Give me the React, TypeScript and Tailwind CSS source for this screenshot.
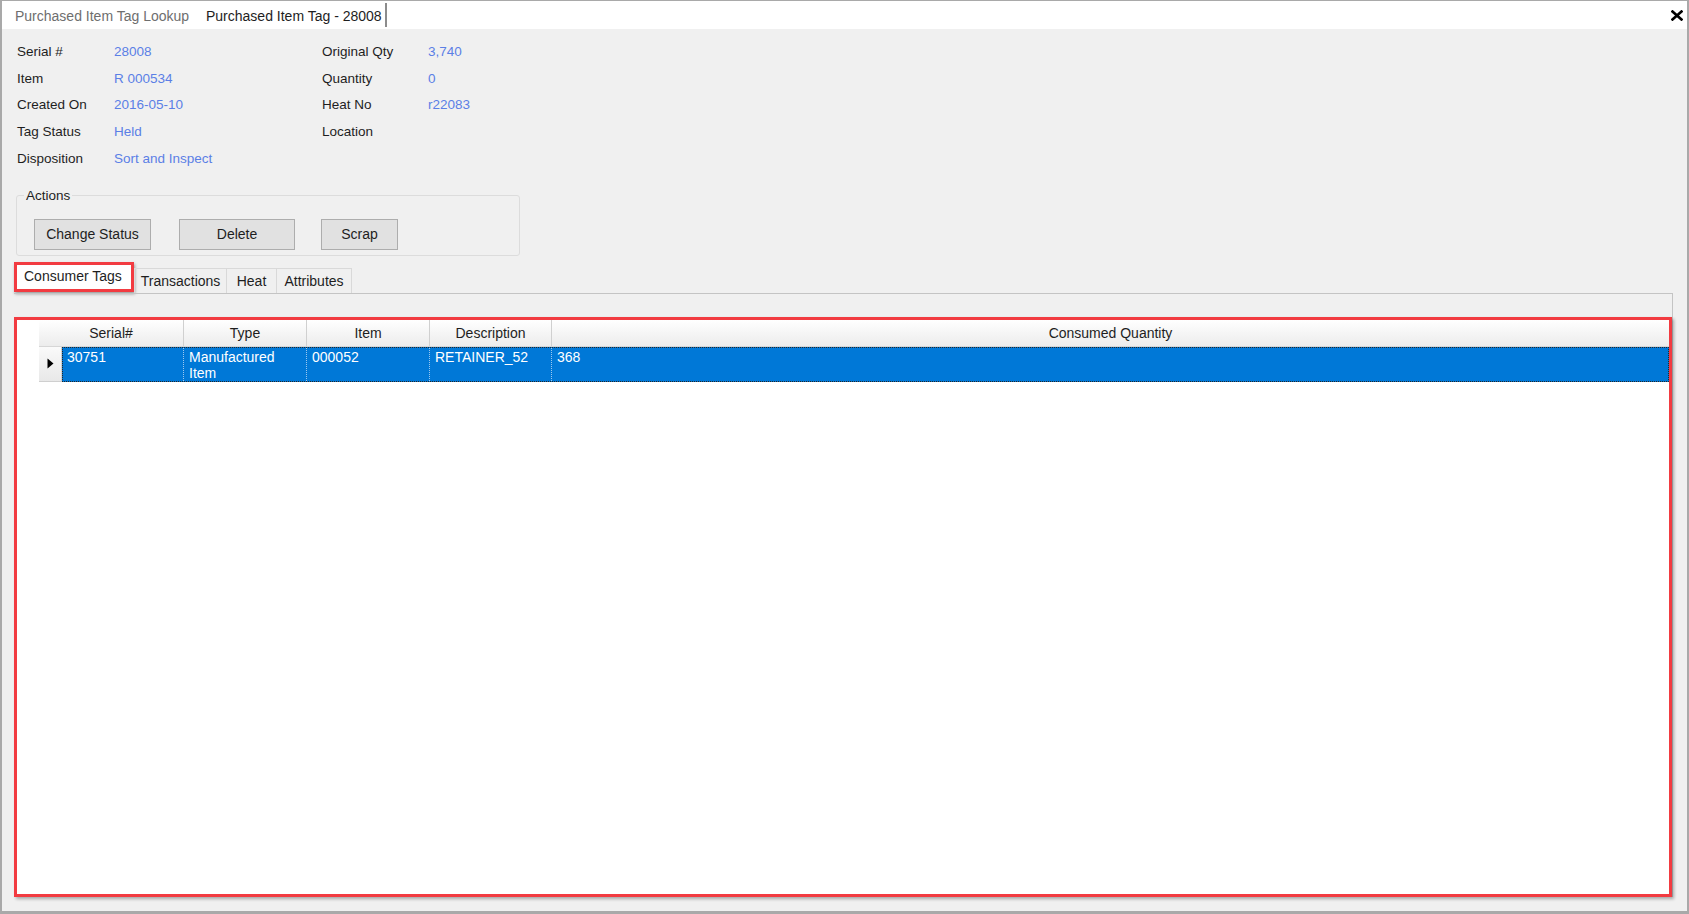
import React from "react";

const info = [
    ["Serial #", "28008", "Original Qty", "3,740"],
    ["Item", "R 000534", "Quantity", "0"],
    ["Created On", "2016-05-10", "Heat No", "r22083"],
    ["Tag Status", "Held", "Location", ""],
    ["Disposition", "Sort and Inspect", "", ""],
];

const App = () => {
    return (
        <div className="w-[1689px] h-[914px] flex flex-col bg-[#f0f0f0] border-t border-l-2 border-r-2 border-b-[3px] border-[#a9a9a9] font-['Liberation_Sans',Arial,sans-serif] text-[13.5px] text-[#1e1e1e] overflow-hidden">
            {/* Document tabs */}
            <div className="h-[28px] bg-white flex items-stretch text-[14px]">
                <div className="w-[196px] pl-[13px] pt-[2px] flex items-center text-[#6e6e6e]">Purchased Item Tag Lookup</div>
                <div className="w-[189px] pl-[8px] pt-[2px] flex items-center border-r-2 border-[#8c8c8c] my-[2px]">Purchased Item Tag - 28008</div>
                <div className="flex-1" />
                <div className="pr-[4px] flex items-center">
                    <svg width="12" height="11" viewBox="0 0 12 11">
                        <path d="M1.5 1.5 L10.5 9.5 M10.5 1.5 L1.5 9.5" stroke="#000" strokeWidth="2.6" strokeLinecap="square" />
                    </svg>
                </div>
            </div>

            <div className="flex-1 flex flex-col pl-[12px] pr-[14px] pb-[14px]">
                {/* Header fields */}
                <div className="pt-[10px] pl-[3px] grid grid-cols-[97px_208px_106px_1fr] leading-[26.7px]">
                    {info.map((r, i) => (
                        <React.Fragment key={i}>
                            <div>{r[0]}</div>
                            <div className="text-[#5b7fe6]">{r[1]}</div>
                            <div>{r[2]}</div>
                            <div className="text-[#5b7fe6]">{r[3]}</div>
                        </React.Fragment>
                    ))}
                </div>

                {/* Actions */}
                <fieldset className="mt-[15px] ml-[2px] w-[504px] border border-[#dcdcdc] rounded-[3px] px-[17px] pb-[5px]">
                    <legend className="ml-[-10px] px-[2px] leading-[16px]">Actions</legend>
                    <div className="flex pt-[15px] text-[14px]">
                        <button className="h-[31px] w-[117px] bg-[#e1e1e1] border border-[#adadad]">Change Status</button>
                        <button className="h-[31px] w-[116px] ml-[28px] bg-[#e1e1e1] border border-[#adadad]">Delete</button>
                        <button className="h-[31px] w-[77px] ml-[26px] bg-[#e1e1e1] border border-[#adadad]">Scrap</button>
                    </div>
                </fieldset>

                {/* Tabs */}
                <div className="mt-[6px] h-[31px] flex items-end text-[14px]">
                    <div className="h-[30px] w-[120px] mb-[1px] bg-white border-[3px] border-[#f23b41] shadow-[1px_2px_3px_rgba(0,0,0,0.35)] flex items-center pl-[7px]">Consumer Tags</div>
                    <div className="h-[25px] w-[93px] border border-b-0 border-[#d9d9d9] flex items-center justify-center pt-[1px]">Transactions</div>
                    <div className="h-[25px] w-[50px] border border-l-0 border-b-0 border-[#d9d9d9] flex items-center justify-center pt-[1px]">Heat</div>
                    <div className="h-[25px] w-[75px] border border-l-0 border-b-0 border-[#d9d9d9] flex items-center justify-center pt-[1px]">Attributes</div>
                </div>

                {/* Tab page */}
                <div className="flex-1 flex flex-col border-t border-r border-[#c4c4c4] pt-[23px]">
                    <div className="flex-1 flex flex-col bg-white border-[3px] border-[#f23b41] shadow-[2px_2px_3px_rgba(0,0,0,0.3)] pl-[22px] text-[14px]">
                        {/* Column headers */}
                        <div className="h-[27px] flex bg-linear-to-b from-white to-[#ececec] border-b border-[#d6d6d6]">
                            <div className="w-[145px] border-r border-[#d0d0d0] flex items-center justify-center pt-[2px]">Serial#</div>
                            <div className="w-[123px] border-r border-[#d0d0d0] flex items-center justify-center pt-[2px]">Type</div>
                            <div className="w-[123px] border-r border-[#d0d0d0] flex items-center justify-center pt-[2px]">Item</div>
                            <div className="w-[122px] border-r border-[#d0d0d0] flex items-center justify-center pt-[2px]">Description</div>
                            <div className="flex-1 flex items-center justify-center pt-[2px]">Consumed Quantity</div>
                        </div>

                        {/* Selected row */}
                        <div className="h-[35px] flex">
                            <div className="w-[23px] bg-linear-to-b from-[#fafafa] to-[#e8e8e8] border-r border-b border-[#cfcfcf] flex items-center justify-center">
                                <svg width="7" height="11" viewBox="0 0 7 11">
                                    <path d="M0.5 0.5 L6.5 5.5 L0.5 10.5 Z" fill="#000" />
                                </svg>
                            </div>
                            <div className="flex-1 flex bg-[#0078d7] text-white border border-dotted border-[#262626] leading-[16px]">
                                <div className="w-[121px] pl-[4px] pt-[1px] border-r border-dotted border-[#9cc8ef]">30751</div>
                                <div className="w-[123px] pl-[5px] pt-[1px] border-r border-dotted border-[#9cc8ef]">Manufactured<br />Item</div>
                                <div className="w-[123px] pl-[5px] pt-[1px] border-r border-dotted border-[#9cc8ef]">000052</div>
                                <div className="w-[122px] pl-[5px] pt-[1px] border-r border-dotted border-[#9cc8ef]">RETAINER_52</div>
                                <div className="flex-1 pl-[5px] pt-[1px]">368</div>
                            </div>
                        </div>
                    </div>
                </div>
            </div>
        </div>
    );
}

export default App;
